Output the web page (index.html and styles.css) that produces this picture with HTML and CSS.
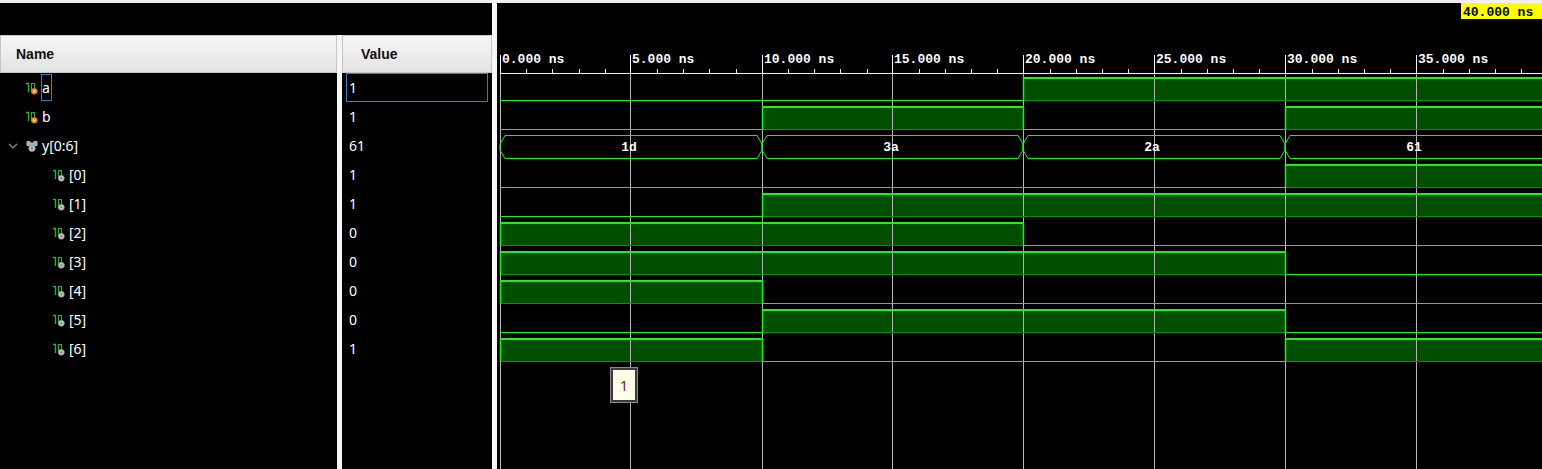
FILE: index.html
```html
<!DOCTYPE html>
<html>
<head>
<meta charset="utf-8">
<link rel="stylesheet" href="styles.css">
</head>
<body>
<div class="app">
  <div class="topstrip"></div>
  <div class="main">
    <div class="left">
      <div class="left-top"></div>
      <div class="cols">
        <div class="col-name">
          <div class="hdr hdr-name">Name</div>
          <div class="row">
            <span class="chev"></span>
            <svg class="ic" viewBox="0 0 12 13" width="12" height="13"><path class="icg" d="M0 1.5H2.5V10"/><path class="icg2" d="M5.5 10V1.5H8.5V7"/><circle cx="8.3" cy="9.3" r="3" class="ico"/><path d="M7.2 8.4L8.3 10.2L9.4 8.4" class="icv"/></svg>
            <span class="lbl sel">a</span>
          </div>
          <div class="row">
            <span class="chev"></span>
            <svg class="ic" viewBox="0 0 12 13" width="12" height="13"><path class="icg" d="M0 1.5H2.5V10"/><path class="icg2" d="M5.5 10V1.5H8.5V7"/><circle cx="8.3" cy="9.3" r="3" class="ico"/><path d="M7.2 8.4L8.3 10.2L9.4 8.4" class="icv"/></svg>
            <span class="lbl">b</span>
          </div>
          <div class="row">
            <span class="chev"><svg viewBox="0 0 10 6" width="10" height="6"><path d="M1 0.8L5 4.8L9 0.8" class="chv"/></svg></span>
            <svg class="ic" viewBox="0 0 12 13" width="12" height="13"><rect x="0.5" y="1" width="4" height="5" rx="0.8" class="icb"/><rect x="7.5" y="1" width="4" height="5" rx="0.8" class="icb"/><rect x="3" y="2.5" width="6" height="2.5" class="icb"/><circle cx="6" cy="8.3" r="3.3" class="icgr"/><circle cx="6" cy="8.3" r="1.2" class="icgd"/></svg>
            <span class="lbl">y[0:6]</span>
          </div>
          <div class="row l1">
            <span class="chev"></span>
            <svg class="ic" viewBox="0 0 12 13" width="12" height="13"><path class="icg" d="M0 1.5H2.5V10"/><path class="icg2" d="M5.5 10V1.5H8.5V7"/><circle cx="8.3" cy="9.3" r="3" class="icgr"/><circle cx="8.3" cy="9.3" r="1.1" class="icgd"/></svg>
            <span class="lbl">[0]</span>
          </div>
          <div class="row l1">
            <span class="chev"></span>
            <svg class="ic" viewBox="0 0 12 13" width="12" height="13"><path class="icg" d="M0 1.5H2.5V10"/><path class="icg2" d="M5.5 10V1.5H8.5V7"/><circle cx="8.3" cy="9.3" r="3" class="icgr"/><circle cx="8.3" cy="9.3" r="1.1" class="icgd"/></svg>
            <span class="lbl">[1]</span>
          </div>
          <div class="row l1">
            <span class="chev"></span>
            <svg class="ic" viewBox="0 0 12 13" width="12" height="13"><path class="icg" d="M0 1.5H2.5V10"/><path class="icg2" d="M5.5 10V1.5H8.5V7"/><circle cx="8.3" cy="9.3" r="3" class="icgr"/><circle cx="8.3" cy="9.3" r="1.1" class="icgd"/></svg>
            <span class="lbl">[2]</span>
          </div>
          <div class="row l1">
            <span class="chev"></span>
            <svg class="ic" viewBox="0 0 12 13" width="12" height="13"><path class="icg" d="M0 1.5H2.5V10"/><path class="icg2" d="M5.5 10V1.5H8.5V7"/><circle cx="8.3" cy="9.3" r="3" class="icgr"/><circle cx="8.3" cy="9.3" r="1.1" class="icgd"/></svg>
            <span class="lbl">[3]</span>
          </div>
          <div class="row l1">
            <span class="chev"></span>
            <svg class="ic" viewBox="0 0 12 13" width="12" height="13"><path class="icg" d="M0 1.5H2.5V10"/><path class="icg2" d="M5.5 10V1.5H8.5V7"/><circle cx="8.3" cy="9.3" r="3" class="icgr"/><circle cx="8.3" cy="9.3" r="1.1" class="icgd"/></svg>
            <span class="lbl">[4]</span>
          </div>
          <div class="row l1">
            <span class="chev"></span>
            <svg class="ic" viewBox="0 0 12 13" width="12" height="13"><path class="icg" d="M0 1.5H2.5V10"/><path class="icg2" d="M5.5 10V1.5H8.5V7"/><circle cx="8.3" cy="9.3" r="3" class="icgr"/><circle cx="8.3" cy="9.3" r="1.1" class="icgd"/></svg>
            <span class="lbl">[5]</span>
          </div>
          <div class="row l1">
            <span class="chev"></span>
            <svg class="ic" viewBox="0 0 12 13" width="12" height="13"><path class="icg" d="M0 1.5H2.5V10"/><path class="icg2" d="M5.5 10V1.5H8.5V7"/><circle cx="8.3" cy="9.3" r="3" class="icgr"/><circle cx="8.3" cy="9.3" r="1.1" class="icgd"/></svg>
            <span class="lbl">[6]</span>
          </div>
        </div>
        <div class="divider"></div>
        <div class="col-value">
          <div class="hdr hdr-value">Value</div>
          <div class="val sel">1</div>
          <div class="val">1</div>
          <div class="val">61</div>
          <div class="val">1</div>
          <div class="val">1</div>
          <div class="val">0</div>
          <div class="val">0</div>
          <div class="val">0</div>
          <div class="val">0</div>
          <div class="val">1</div>
        </div>
      </div>
    </div>
    <div class="divider"></div>
    <div class="wave-panel">
      <svg class="wave" viewBox="0 0 1045 466" width="1045" height="466">
        <!-- cursor label -->
        <rect x="964" y="0" width="81" height="16" class="cur"/>
        <text x="966" y="13" class="curt">40.000 ns</text>

        <!-- ruler -->
        <path class="rl" d="M3 70.5H1045"/>
        <path class="rl" d="M3.5 52V70M133.5 52V70M265.5 52V70M395.5 52V70M526.5 52V70M657.5 52V70M788.5 52V70M919.5 52V70"/>
        <path class="rl" d="M29.5 66V70M55.5 66V70M82.5 66V70M108.5 66V70M160.5 66V70M186.5 66V70M212.5 66V70M239.5 66V70M291.5 66V70M317.5 66V70M343.5 66V70M370.5 66V70M422.5 66V70M448.5 66V70M474.5 66V70M500.5 66V70M553.5 66V70M579.5 66V70M605.5 66V70M631.5 66V70M684.5 66V70M710.5 66V70M736.5 66V70M762.5 66V70M815.5 66V70M841.5 66V70M867.5 66V70M893.5 66V70M946.5 66V70M972.5 66V70M998.5 66V70M1024.5 66V70"/>
        <text class="rt" x="5" y="60">0.000 ns</text>
        <text class="rt" x="135" y="60">5.000 ns</text>
        <text class="rt" x="267" y="60">10.000 ns</text>
        <text class="rt" x="397" y="60">15.000 ns</text>
        <text class="rt" x="528" y="60">20.000 ns</text>
        <text class="rt" x="659" y="60">25.000 ns</text>
        <text class="rt" x="790" y="60">30.000 ns</text>
        <text class="rt" x="921" y="60">35.000 ns</text>

        <!-- high fills -->
        <g class="hf">
          <rect x="526" y="75" width="519" height="23"/>
          <g transform="translate(0,29)"><rect x="265" y="75" width="261" height="23"/><rect x="788" y="75" width="257" height="23"/></g>
          <g transform="translate(0,87)"><rect x="788" y="75" width="257" height="23"/></g>
          <g transform="translate(0,116)"><rect x="265" y="75" width="780" height="23"/></g>
          <g transform="translate(0,145)"><rect x="3" y="75" width="523" height="23"/></g>
          <g transform="translate(0,174)"><rect x="3" y="75" width="785" height="23"/></g>
          <g transform="translate(0,203)"><rect x="3" y="75" width="262" height="23"/></g>
          <g transform="translate(0,232)"><rect x="265" y="75" width="523" height="23"/></g>
          <g transform="translate(0,261)"><rect x="3" y="75" width="262" height="23"/><rect x="788" y="75" width="257" height="23"/></g>
        </g>

        <!-- grid -->
        <path class="gr" d="M3.5 71V466M133.5 71V466M265.5 71V466M395.5 71V466M526.5 71V466M657.5 71V466M788.5 71V466M919.5 71V466"/>

        <!-- row a -->
        <g>
          <path class="lo" d="M3 97.5H526"/>
          <path class="hb" d="M526 97.5H1045"/>
          <path class="ht" d="M526 75H1045"/>
          <path class="ed" d="M526.5 74V98"/>
        </g>
        <!-- row b -->
        <g transform="translate(0,29)">
          <path class="lo" d="M3 97.5H265M526 97.5H788"/>
          <path class="hb" d="M265 97.5H526M788 97.5H1045"/>
          <path class="ht" d="M265 75H526M788 75H1045"/>
          <path class="ed" d="M265.5 74V98M526.5 74V98M788.5 74V98"/>
        </g>
        <!-- bus y[0:6] -->
        <g transform="translate(0,58)">
          <polygon class="bus" points="8,74.5 260,74.5 265,83 265,89 260,97.5 8,97.5 3,89 3,83"/>
          <polygon class="bus" points="270,74.5 521,74.5 526,83 526,89 521,97.5 270,97.5 265,89 265,83"/>
          <polygon class="bus" points="531,74.5 783,74.5 788,83 788,89 783,97.5 531,97.5 526,89 526,83"/>
          <polygon class="bus" points="793,74.5 1050,74.5 1050,97.5 793,97.5 788,89 788,83"/>
          <text class="bt" x="132" y="90">1d</text>
          <text class="bt" x="394" y="90">3a</text>
          <text class="bt" x="655" y="90">2a</text>
          <text class="bt" x="917" y="90">61</text>
        </g>
        <!-- [0] -->
        <g transform="translate(0,87)">
          <path class="lo" d="M3 97.5H788"/>
          <path class="hb" d="M788 97.5H1045"/>
          <path class="ht" d="M788 75H1045"/>
          <path class="ed" d="M788.5 74V98"/>
        </g>
        <!-- [1] -->
        <g transform="translate(0,116)">
          <path class="lo" d="M3 97.5H265"/>
          <path class="hb" d="M265 97.5H1045"/>
          <path class="ht" d="M265 75H1045"/>
          <path class="ed" d="M265.5 74V98"/>
        </g>
        <!-- [2] -->
        <g transform="translate(0,145)">
          <path class="hb" d="M3 97.5H526"/>
          <path class="ht" d="M3 75H526"/>
          <path class="lo" d="M526 97.5H1045"/>
          <path class="ed" d="M3.5 74V98M526.5 74V98"/>
        </g>
        <!-- [3] -->
        <g transform="translate(0,174)">
          <path class="hb" d="M3 97.5H788"/>
          <path class="ht" d="M3 75H788"/>
          <path class="lo" d="M788 97.5H1045"/>
          <path class="ed" d="M3.5 74V98M788.5 74V98"/>
        </g>
        <!-- [4] -->
        <g transform="translate(0,203)">
          <path class="hb" d="M3 97.5H265"/>
          <path class="ht" d="M3 75H265"/>
          <path class="lo" d="M265 97.5H1045"/>
          <path class="ed" d="M3.5 74V98M265.5 74V98"/>
        </g>
        <!-- [5] -->
        <g transform="translate(0,232)">
          <path class="lo" d="M3 97.5H265M788 97.5H1045"/>
          <path class="hb" d="M265 97.5H788"/>
          <path class="ht" d="M265 75H788"/>
          <path class="ed" d="M265.5 74V98M788.5 74V98"/>
        </g>
        <!-- [6] -->
        <g transform="translate(0,261)">
          <path class="hb" d="M3 97.5H265M788 97.5H1045"/>
          <path class="ht" d="M3 75H265M788 75H1045"/>
          <path class="lo" d="M265 97.5H788"/>
          <path class="ed" d="M3.5 74V98M265.5 74V98M788.5 74V98"/>
        </g>
      </svg>
      <div class="tip">1</div>
    </div>
  </div>
</div>
</body>
</html>
```

FILE: styles.css
```css
html, body {
  margin: 0;
  padding: 0;
}
body {
  background: #000;
  width: 1542px;
  height: 469px;
  overflow: hidden;
  font-family: "Noto Sans", "Liberation Sans", sans-serif;
}
.app {
  display: flex;
  flex-direction: column;
  height: 469px;
}
.topstrip {
  height: 3px;
  background: #f0f0f0;
  flex: none;
}
.main {
  display: flex;
  flex: 1;
  min-height: 0;
}
.left {
  width: 492px;
  display: flex;
  flex-direction: column;
  background: #000;
  flex: none;
}
.left-top {
  height: 32px;
  flex: none;
}
.cols {
  display: flex;
  flex: 1;
}
.col-name {
  width: 337px;
  flex: none;
}
.col-value {
  width: 150px;
  flex: none;
}
.divider {
  width: 5px;
  background: #f6f6f6;
  flex: none;
}
.hdr {
  height: 38px;
  box-sizing: border-box;
  border: 1px solid #c6c6c6;
  background: linear-gradient(#f6f6f6, #e4e4e4);
  font-family: "Liberation Sans", Arial, sans-serif;
  font-weight: 700;
  font-size: 14px;
  color: #111;
  display: flex;
  align-items: center;
}
.hdr-name {
  padding-left: 15px;
}
.hdr-value {
  padding-left: 18px;
}
.row {
  height: 29px;
  display: flex;
  align-items: center;
  color: #fff;
  font-size: 14px;
}
.row.l1 {
  padding-left: 27px;
}
.chev {
  width: 26px;
  box-sizing: border-box;
  padding-left: 8px;
  display: flex;
  align-items: center;
  flex: none;
}
.chev svg {
  display: block;
  margin-top: 1px;
}
.chv {
  fill: none;
  stroke: #9a9a9a;
  stroke-width: 1.2;
}
.ic {
  display: block;
  flex: none;
  margin-top: 1px;
}
.icg {
  fill: none;
  stroke: #2fae2f;
  stroke-width: 1.4;
}
.icg2 {
  fill: none;
  stroke: #2fae2f;
  stroke-width: 1.1;
}
.ico {
  fill: #ea9430;
  stroke: #c06a10;
  stroke-width: 0.6;
}
.icv {
  fill: none;
  stroke: #fff1c0;
  stroke-width: 0.9;
}
.icgr {
  fill: #c4c4c4;
  stroke: #8a8a8a;
  stroke-width: 0.7;
}
.icgd {
  fill: #7a7a7a;
}
.icb {
  fill: #9fb8d2;
}
.lbl {
  margin-left: 3px;
  height: 27px;
  line-height: 25px;
  box-sizing: border-box;
  border: 1px solid transparent;
  padding: 0 1px 0 0;
  white-space: nowrap;
}
.lbl.sel {
  border-color: #3c7fb4;
}
.val {
  height: 29px;
  box-sizing: border-box;
  padding-left: 7px;
  color: #fff;
  font-size: 14px;
  line-height: 29px;
}
.val.sel {
  margin: 0 4px;
  border: 1px solid #3c7fb4;
  padding-left: 2px;
  line-height: 27px;
}
.wave-panel {
  flex: 1;
  position: relative;
  background: #000;
  overflow: hidden;
}
.wave {
  display: block;
}
.cur {
  fill: #ffff00;
}
.curt {
  font-family: "Liberation Mono", monospace;
  font-weight: 700;
  font-size: 13px;
  fill: #000;
}
.rl {
  stroke: #f2f2f2;
  stroke-width: 1;
  fill: none;
}
.rt {
  font-family: "Liberation Mono", monospace;
  font-weight: 700;
  font-size: 13px;
  fill: #fff;
}
.gr {
  stroke: #b4b4b4;
  stroke-width: 1;
  fill: none;
}
.hf rect {
  fill: #004f00;
}
.lo {
  stroke: #1cf01c;
  stroke-width: 1;
  fill: none;
}
.hb {
  stroke: #128a12;
  stroke-width: 1;
  fill: none;
}
.ht {
  stroke: #1cf01c;
  stroke-width: 2;
  fill: none;
}
.ed {
  stroke: #1cf01c;
  stroke-width: 1.5;
  fill: none;
}
.bus {
  fill: none;
  stroke: #1cf01c;
  stroke-width: 1;
}
.bt {
  font-family: "Liberation Mono", monospace;
  font-weight: 700;
  font-size: 13px;
  fill: #fff;
  text-anchor: middle;
}
.tip {
  position: absolute;
  left: 114px;
  top: 365px;
  width: 26px;
  height: 34px;
  box-sizing: border-box;
  background: #fdfde8;
  border: 2px solid #3c3c3c;
  box-shadow: 0 0 0 1px #8a8a8a;
  color: #7a1414;
  font-size: 14px;
  display: flex;
  align-items: center;
  justify-content: center;
}
```
